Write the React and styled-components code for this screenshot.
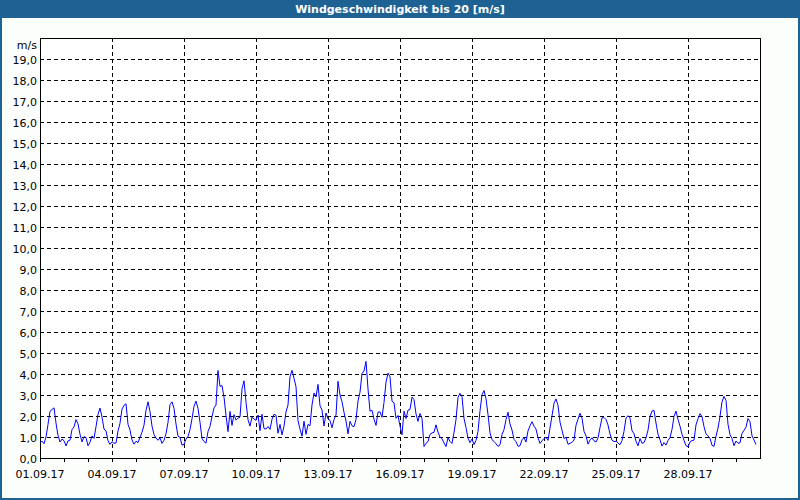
import React from 'react';
import styled, { createGlobalStyle } from 'styled-components';

const GlobalStyle = createGlobalStyle`
	body { margin: 0; background: #fff; font-family: "DejaVu Sans", Verdana, sans-serif; }
`;

const Frame = styled.div`
	width: 800px;
	height: 500px;
	box-sizing: border-box;
	display: flex;
	flex-direction: column;
	border: 2px solid #1d6293;
	border-top: none;
	background: #fcfefc;
`;

const TitleBar = styled.div`
	height: 20px;
	margin: 0 -2px;
	background: #1d6293;
	color: #fff;
	font-size: 11px;
	font-weight: bold;
	display: flex;
	align-items: center;
	justify-content: center;
`;

const ChartArea = styled.div`
	flex: 1;
`;

const X0 = 40, Y0 = 460, PX_DAY = 24, PX_UNIT = 21;
const peaks = [2.5, 1.8, 2.3, 2.7, 2.7, 2.7, 2.6, 4.0, 3.2, 2.0, 4.5, 3.5, 3.5, 4.6, 3.7, 2.6, 1.5, 3.2, 3.4, 2.0, 1.8, 3.0, 2.0, 2.1, 1.9, 2.3, 2.2, 2.3, 2.9, 1.8];

function series() {
	let s = 7;
	const rnd = () => { s = (s * 9301 + 49297) % 233280; return s / 233280; };
	const pts = [];
	for (let i = 0; i <= 30 * PX_DAY - 3; i += 2) {
		const day = Math.min(29, Math.floor(i / PX_DAY));
		const h = (i % PX_DAY) / PX_DAY;
		const windy = day >= 7 && day <= 15;
		const base = windy ? 1.6 : 0.75;
		const bump = Math.exp(-Math.pow((h - 0.5) / 0.2, 2));
		const v = base + (peaks[day] - base) * bump + (rnd() - 0.5) * (windy ? 1.2 : 0.45);
		pts.push(`${X0 + i},${(Y0 - Math.max(0.3, v) * PX_UNIT).toFixed(1)}`);
	}
	return pts.join(' ');
}

const Chart = () => {
	const ys = Array.from({ length: 19 }, (_, i) => i + 1);
	const xs = Array.from({ length: 10 }, (_, i) => i);
	return (
		<svg width="796" height="480" viewBox="2 20 796 480" style={{ display: 'block' }} fontFamily='"DejaVu Sans", sans-serif' fontSize="11">
			<rect x={X0 + 0.5} y={40.5} width={720} height={420} fill="#fff" stroke="#000" />
			{ys.map(v => (
				<g key={v}>
					<line x1={X0} x2={X0 + 720} y1={Y0 - v * PX_UNIT + 0.5} y2={Y0 - v * PX_UNIT + 0.5} stroke="#000" strokeDasharray="4 3" />
					<text x={X0 - 3} y={Y0 - v * PX_UNIT + 5} textAnchor="end">{v},0</text>
				</g>
			))}
			<text x={X0 - 3} y={Y0 + 5} textAnchor="end">0,0</text>
			<text x={X0 - 3} y={51} textAnchor="end">m/s</text>
			{xs.map(i => (
				<g key={i}>
					{i > 0 && <line x1={X0 + i * 72 + 0.5} x2={X0 + i * 72 + 0.5} y1={40} y2={Y0} stroke="#000" strokeDasharray="4 3" />}
					<text x={X0 + i * 72} y={Y0 + 20} textAnchor="middle">{String(1 + i * 3).padStart(2, '0')}.09.17</text>
				</g>
			))}
			{Array.from({ length: 30 }, (_, i) => (
				<line key={i} x1={X0 + i * 24 + 0.5} x2={X0 + i * 24 + 0.5} y1={Y0} y2={Y0 + 4} stroke="#000" />
			))}
			<polyline points={series()} fill="none" stroke="#0000ff" strokeWidth="1" />
		</svg>
	);
};

export default function App() {
	return (
		<>
			<GlobalStyle />
			<Frame>
				<TitleBar>Windgeschwindigkeit bis 20 [m/s]</TitleBar>
				<ChartArea><Chart /></ChartArea>
			</Frame>
		</>
	);
}
